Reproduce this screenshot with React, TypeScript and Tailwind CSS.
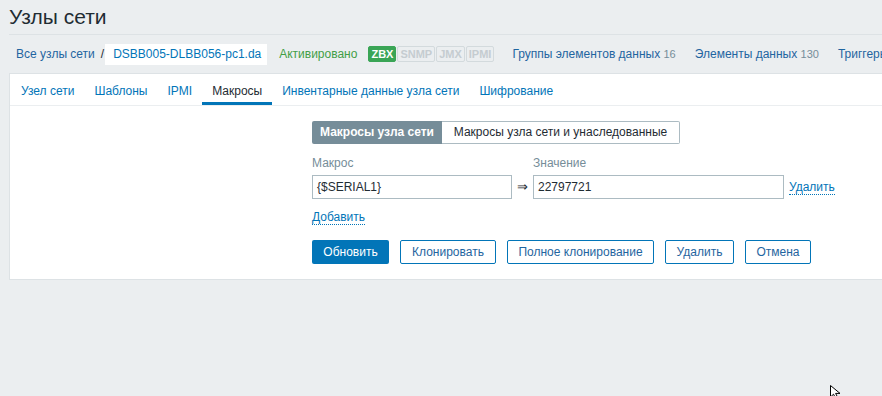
import React from 'react';

const tabs = ['Узел сети', 'Шаблоны', 'IPMI', 'Макросы', 'Инвентарные данные узла сети', 'Шифрование'];

const Badge = ({ label, on }: { label: string; on?: boolean }) => (
  <span
    className={
      on
        ? 'h-[16px] px-[2px] leading-[14px] text-[11px] font-bold text-white bg-[#3aa556] border border-[#3aa556] rounded-[2px]'
        : 'h-[16px] px-[2px] leading-[14px] text-[11px] font-bold text-[#c5ccd0] border border-[#d3dadd] rounded-[2px]'
    }
  >
    {label}
  </span>
);

const OutlineBtn = ({ children, w }: { children: React.ReactNode; w: string }) => (
  <button className={`h-[24px] ${w} border border-[#0275b8] rounded-[2px] bg-white text-[12px] text-[#1f65a0]`}>
    {children}
  </button>
);

export default function App() {
  return (
    <div
      className="w-[882px] h-[396px] overflow-hidden bg-[#ebeef0] text-[12px] text-[#1f2c33] relative"
      style={{ fontFamily: '"Liberation Sans", Arial, sans-serif' }}
    >
      <div className="pl-[9px] w-[1100px]">
        <h1 className="w-[873px] h-[35px] pt-[5px] text-[21px] leading-[24px] border-b border-[#dde2e5]">Узлы сети</h1>

        {/* breadcrumbs + host nav */}
        <div className="h-[38px] flex items-center whitespace-nowrap [&>*]:shrink-0">
          <span className="ml-[7px] text-[#1f65a0]">Все узлы сети</span>
          <span className="ml-[6px] text-[#1f2c33]">/</span>
          <span className="ml-[1px] w-[162px] h-[21px] bg-white leading-[21px] pl-[8px] overflow-hidden text-[#0275b8]">
            DSBB005-DLBB056-pc1.da
          </span>
          <span className="ml-[12px] text-[#429e47]">Активировано</span>
          <div className="ml-[11px] flex gap-[1px]">
            <Badge label="ZBX" on />
            <Badge label="SNMP" />
            <Badge label="JMX" />
            <Badge label="IPMI" />
          </div>
          <span className="ml-[18px] text-[#1f65a0]">
            Группы элементов данных <span className="text-[#768d99] text-[11px]">16</span>
          </span>
          <span className="ml-[19px] text-[#1f65a0]">
            Элементы данных <span className="text-[#768d99] text-[11px]">130</span>
          </span>
          <span className="ml-[19px] text-[#1f65a0]">Триггеры</span>
        </div>

        {/* panel */}
        <div className="w-[900px] h-[207px] bg-white border border-[#dde2e5]">
          <div className="h-[32px] flex border-b border-[#ebeef0] pl-[1px]">
            {tabs.map((t) => (
              <div
                key={t}
                className={
                  t === 'Макросы'
                    ? 'h-[31px] px-[10px] pt-[8px] border-b-[3px] border-[#0275b8] text-[#1f2c33]'
                    : 'h-[31px] px-[10px] pt-[8px] text-[#0275b8]'
                }
              >
                {t}
              </div>
            ))}
          </div>

          <div className="pl-[302px] pt-[15px]">
            <div className="flex h-[23px]">
              <div className="w-[130px] bg-[#768d99] text-white font-bold leading-[23px] text-center rounded-l-[2px]">
                Макросы узла сети
              </div>
              <div className="w-[238px] border border-[#acbbc2] border-l-0 leading-[21px] text-center rounded-r-[2px]">
                Макросы узла сети и унаследованные
              </div>
            </div>

            <div className="flex mt-[12px] text-[#768d99] leading-[14px]">
              <span className="w-[221px]">Макрос</span>
              <span>Значение</span>
            </div>

            <div className="flex items-center mt-[5px]">
              <div className="w-[200px] h-[24px] border border-[#acbbc2] pl-[4px] leading-[22px]">{'{$SERIAL1}'}</div>
              <span className="w-[21px] text-center text-[13px]">⇒</span>
              <div className="w-[251px] h-[24px] border border-[#acbbc2] pl-[4px] leading-[22px]">22797721</div>
              <span className="ml-[5px] text-[#0275b8] border-b border-dotted border-[#0275b8] leading-[13px] mt-[2px]">
                Удалить
              </span>
            </div>

            <div className="mt-[9px]">
              <span className="text-[#0275b8] border-b border-dotted border-[#0275b8] inline-block leading-[14px]">
                Добавить
              </span>
            </div>

            <div className="flex gap-[11px] mt-[14px]">
              <button className="h-[24px] w-[77px] bg-[#0275b8] rounded-[2px] text-white text-[12px]">Обновить</button>
              <OutlineBtn w="w-[96px]">Клонировать</OutlineBtn>
              <OutlineBtn w="w-[147px]">Полное клонирование</OutlineBtn>
              <OutlineBtn w="w-[69px]">Удалить</OutlineBtn>
              <OutlineBtn w="w-[66px]">Отмена</OutlineBtn>
            </div>
          </div>
        </div>
      </div>

      {/* mouse pointer */}
      <svg className="absolute left-[830px] top-[385px]" width="12" height="14" viewBox="0 0 12 14">
        <path d="M0.5 0.5 L0.5 12 L3.5 9.2 L6 14 L8 13 L5.6 8.4 L10 8.4 Z" fill="#fff" stroke="#000" strokeWidth="1" />
      </svg>
    </div>
  );
}
